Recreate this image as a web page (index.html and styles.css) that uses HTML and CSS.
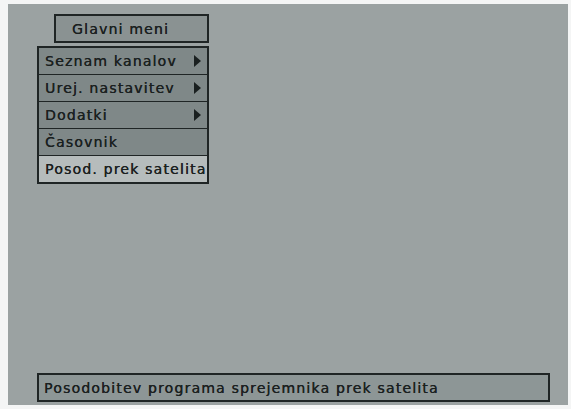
FILE: index.html
```html
<!DOCTYPE html>
<html>
<head>
<meta charset="utf-8">
<link rel="stylesheet" href="styles.css">
</head>
<body>
<div class="screen">
  <div class="title">Glavni meni</div>
  <div class="menu">
    <div class="row"><span>Seznam kanalov</span><span class="arrow"></span></div>
    <div class="row"><span>Urej. nastavitev</span><span class="arrow"></span></div>
    <div class="row"><span>Dodatki</span><span class="arrow"></span></div>
    <div class="row"><span>Časovnik</span></div>
    <div class="row selected"><span>Posod. prek satelita</span></div>
  </div>
  <div class="spacer"></div>
  <div class="status">Posodobitev programa sprejemnika prek satelita</div>
</div>
</body>
</html>
```
FILE: styles.css
```css
html, body {
  margin: 0;
  padding: 0;
  background: #f4f5f5;
  width: 571px;
  height: 409px;
  overflow: hidden;
}
.screen {
  box-sizing: border-box;
  margin: 4px 3px 0 8px;
  width: 560px;
  height: 401px;
  background: #9ba2a2;
  display: flex;
  flex-direction: column;
  padding: 10px 18px 3px 29px;
  font-family: "DejaVu Sans", sans-serif;
  font-size: 14px;
  letter-spacing: 1.2px;
  color: #1a2020;
  text-shadow: 0.3px 0 0 #1a2020;
}
.title {
  box-sizing: border-box;
  margin-left: 17px;
  width: 155px;
  height: 29px;
  border: 2px solid #1f2525;
  background: #8a9292;
  display: flex;
  align-items: center;
  padding-left: 16px;
}
.menu {
  box-sizing: border-box;
  margin-top: 3px;
  width: 172px;
  border: 2px solid #1f2525;
  background: #1f2525;
  display: flex;
  flex-direction: column;
  gap: 1px;
}
.row {
  height: 26px;
  background: #7f8888;
  display: flex;
  align-items: center;
  justify-content: space-between;
  padding: 0 6px 0 6px;
  white-space: nowrap;
  overflow: hidden;
}
.row.selected {
  background: #b6bcbc;
  padding-right: 0;
}
.arrow {
  flex: none;
  width: 0;
  height: 0;
  border-top: 6px solid transparent;
  border-bottom: 6px solid transparent;
  border-left: 7px solid #1a2020;
}
.spacer {
  flex: 1;
}
.status {
  box-sizing: border-box;
  height: 29px;
  border: 2px solid #1f2525;
  background: #8d9696;
  display: flex;
  align-items: center;
  padding-left: 5px;
}
```
